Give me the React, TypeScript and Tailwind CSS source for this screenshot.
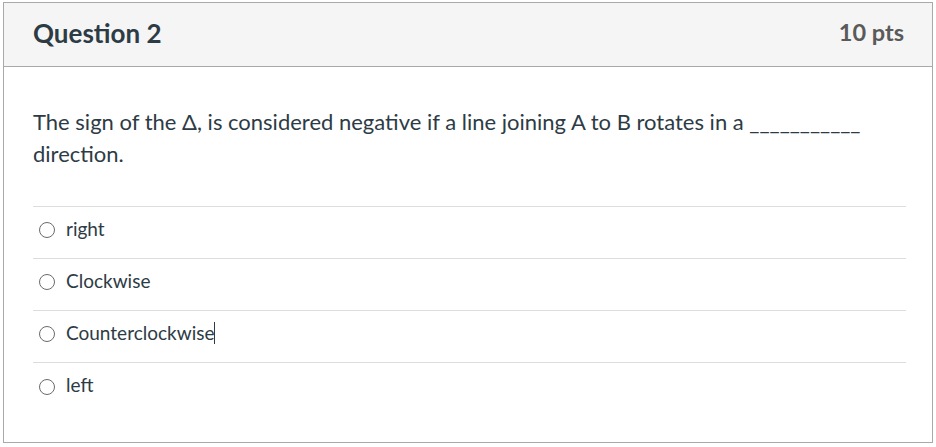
export default function App() {
  const answers = ["right", "Clockwise", "Counterclockwise", "left"];
  return (
    <div className="w-[936px] h-[447px] bg-white pt-[2px] pl-[3px]" style={{ fontFamily: "Lato, 'Open Sans', sans-serif" }}>
      <div className="w-[930px] h-[441px] border border-[#a9a9a9] flex flex-col">
        <div className="h-[64px] bg-[#f5f5f5] border-b border-[#a9a9a9] flex items-center justify-between pl-[29px] pr-[28px] pb-[3px]">
          <span className="text-[26px] font-bold text-[#2d3b45]">Question 2</span>
          <span className="text-[23.5px] font-bold text-[#5a5a5a]">10 pts</span>
        </div>
        <div className="pl-[29px] pr-[26px] pt-[39px]">
          <p className="text-[22px] leading-[32px] text-[#2d3b45] pr-[40px]">
            The sign of the Δ, is considered negative if a line joining A to B rotates in a ___________ direction.
          </p>
          <div className="mt-[36px] border-t border-[#dddddd]">
            {answers.map((a, i) => (
              <div key={a} className={`h-[52px] flex items-center gap-[11px] pl-[6px] pb-[7px] ${i < answers.length - 1 ? "border-b border-[#dddddd]" : ""}`}>
                <span className="w-[16px] h-[16px] rounded-full border border-[#6b6b6b] bg-white mt-[2px]" />
                <span className="text-[19px] text-[#2d3b45] flex items-center">
                  {a}
                  {a === "Counterclockwise" && <span className="inline-block w-[1px] h-[22px] bg-[#2d3b45]" />}
                </span>
              </div>
            ))}
          </div>
        </div>
      </div>
    </div>
  );
}
